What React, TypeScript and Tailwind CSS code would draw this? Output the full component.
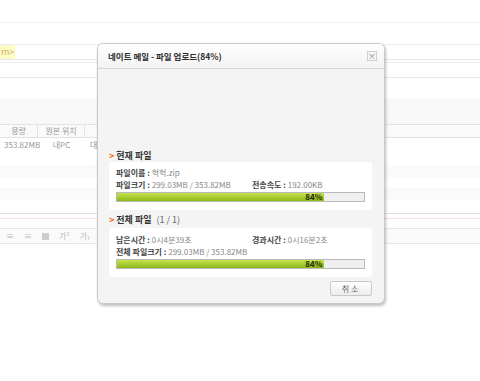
const font = { fontFamily: '"Noto Sans CJK KR", "Noto Sans", sans-serif' };

function Progress({ pct }: { pct: number }) {
  return (
    <div className="h-[10px] w-[249px] border border-[#b9b9b9] bg-[#f0f0f0]">
      <div
        className="h-full bg-gradient-to-b from-[#c6e24a] to-[#8cb812] flex items-center justify-end pr-[2px]"
        style={{ width: `${pct}%` }}
      >
        <span className="text-[8px] leading-none font-bold text-[#1d2a05]">{pct}%</span>
      </div>
    </div>
  );
}

function SectionTitle({ title, extra }: { title: string; extra?: string }) {
  return (
    <div className="flex items-center h-[12px] text-[9px] leading-[12px]">
      <span className="text-[#f26b0f] font-bold mr-[2px]">&gt;</span>
      <span className="font-bold text-[#333]">{title}</span>
      {extra && <span className="ml-[5px] text-[#666]">{extra}</span>}
    </div>
  );
}

function Label({ k, v }: { k: string; v: string }) {
  return (
    <span className="whitespace-nowrap">
      <span className="font-bold text-[#444]">{k} : </span>
      <span className="text-[#888]">{v}</span>
    </span>
  );
}

export default function App() {
  return (
    <div className="relative w-[480px] h-[381px] bg-white overflow-hidden" style={font}>
      {/* background page */}
      <div className="flex flex-col">
        <div className="h-[23px] border-b border-[#f0f0f0]"></div>
        <div className="h-[22px] border-b border-[#ebebeb]"></div>
        <div className="h-[15px] border-b border-[#e6e6e6] flex items-center">
          <span className="h-full px-[1px] bg-[#fffbc4] text-[#c8b070] text-[9px] leading-[14px]">m&gt;</span>
        </div>
        <div className="h-[3px] border-b border-[#eee]"></div>
        <div className="h-[15px] border-b border-[#e6e6e6]"></div>
        <div className="h-[21px]"></div>
        <div className="h-[26px] bg-[#f8f8f8] border-b border-[#e2e2e2]"></div>
        <div className="h-[13px] bg-[#fafafa] border-b border-[#e2e2e2] flex text-[#999] text-[8px] leading-[12px]">
          <div className="w-[38px] text-center border-r border-[#e2e2e2]">용량</div>
          <div className="w-[47px] text-center border-r border-[#e2e2e2]">원본 위치</div>
        </div>
        <div className="h-[13px] flex text-[#999] text-[8px] leading-[13px]">
          <div className="w-[38px] pl-[4px]">353.82MB</div>
          <div className="w-[47px] text-center">내PC</div>
          <div className="pl-[5px]">대</div>
        </div>
        <div className="h-[14px]"></div>
        <div className="h-[12px] bg-[#fafafa]"></div>
        <div className="h-[11px]"></div>
        <div className="h-[12px] bg-[#fafafa]"></div>
        <div className="h-[14px] border-b border-[#dedede]"></div>
        <div className="h-[5px] border-b border-[#f6dede]"></div>
        <div className="h-[10px] border-b border-[#e4e4e4]"></div>
        <div className="h-[15px] border-b border-[#e4e4e4] bg-[#fafafa] flex items-center gap-[10px] pl-[6px] text-[#bbb] text-[8px]">
          <span>≡</span>
          <span>≡</span>
          <span className="w-[7px] h-[7px] bg-[#ccc]"></span>
          <span>가²</span>
          <span>가₁</span>
          <span className="w-[8px] h-[8px] border border-[#bbb]"></span>
        </div>
      </div>

      {/* upload dialog */}
      <div className="absolute left-[97px] top-[43px] w-[288px] h-[261px] flex flex-col rounded-[6px] border border-[#c9c9c9] bg-[#f4f4f4] shadow-[1px_2px_3px_rgba(0,0,0,0.25)] overflow-hidden">
        <div className="h-[25px] shrink-0 flex items-center justify-between pl-[10px] pr-[7px] bg-gradient-to-b from-white to-[#f3f3f3] border-b border-[#d6d6d6]">
          <span className="text-[8.5px] font-bold text-[#2d2d2d]">네이트 메일 - 파일 업로드(84%)</span>
          <span className="w-[10px] h-[10px] border border-[#cfcfcf] bg-[#f5f5f5] flex items-center justify-center text-[8px] leading-none text-[#888]">×</span>
        </div>
        <div className="flex-1 flex flex-col pl-[11px] pr-[12px] pt-[81px]">
          <SectionTitle title="현재 파일" />
          <div className="h-[48px] rounded-[4px] bg-white px-[7px] pt-[5px] text-[8px] leading-[12px]">
            <div className="h-[12px]">
              <Label k="파일이름" v="헉헉.zip" />
            </div>
            <div className="h-[12px] flex">
              <div className="w-[136px]">
                <Label k="파일크기" v="299.03MB / 353.82MB" />
              </div>
              <Label k="전송속도" v="192.00KB" />
            </div>
            <div className="mt-[1px]">
              <Progress pct={84} />
            </div>
          </div>
          <div className="mt-[4px] mb-[2px]">
            <SectionTitle title="전체 파일" extra="(1 / 1)" />
          </div>
          <div className="h-[49px] rounded-[4px] bg-white px-[7px] pt-[6px] text-[8px] leading-[12px]">
            <div className="h-[12px] flex">
              <div className="w-[136px]">
                <Label k="남은시간" v="0시4분39초" />
              </div>
              <Label k="경과시간" v="0시16분2초" />
            </div>
            <div className="h-[12px]">
              <Label k="전체 파일크기" v="299.03MB / 353.82MB" />
            </div>
            <div className="mt-[1px]">
              <Progress pct={84} />
            </div>
          </div>
          <div className="flex justify-end mt-[4px]">
            <button className="w-[42px] h-[15px] border border-[#c8c8c8] rounded-[2px] bg-gradient-to-b from-white to-[#ececec] text-[8px] leading-none tracking-[2px] text-[#666]">
              취소
            </button>
          </div>
        </div>
      </div>
    </div>
  );
}
